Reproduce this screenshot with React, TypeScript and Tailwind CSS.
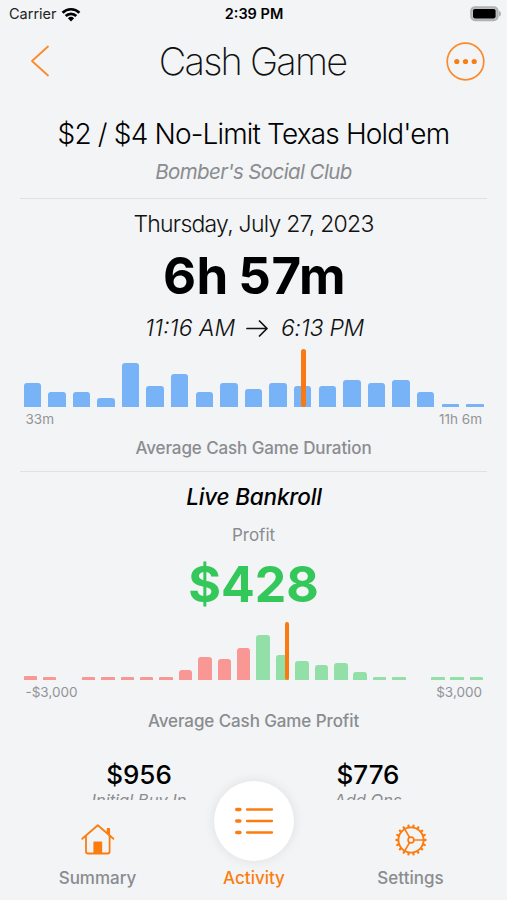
import type { ReactNode } from "react";

type Bar = { height: number; color: string };

const durationBars = [24, 15, 15, 9, 44, 21, 33, 15, 24, 18, 24, 21, 21, 27, 24, 27, 15, 3, 3].map(
  (height): Bar => ({ height, color: "bg-[#78b3f8]" })
);

const profitBars: Bar[] = [
  ...[4, 2.5, 0, 2.5, 2.5, 2.5, 2.5, 2.5, 10, 22.5, 21, 32].map((height) => ({ height, color: "bg-[#f99795]" })),
  ...[44.5, 24.5, 19, 15, 17, 8, 2.5, 2.5, 0, 2.5, 2.5, 2.5].map((height) => ({ height, color: "bg-[#93dfa8]" })),
];

const WifiIcon = () => (
  <svg width="20" height="15" viewBox="0 0 20 15" fill="none" stroke="#000" strokeWidth="2.7">
    <path d="M1.6 5.7a12 12 0 0 1 16.8 0" />
    <path d="M4.7 9a7.6 7.6 0 0 1 10.6 0" />
    <path d="M10 14.4 6.9 11.2a4.5 4.5 0 0 1 6.2 0Z" fill="#000" stroke="none" />
  </svg>
);

const BatteryIcon = () => (
  <svg width="32" height="16" viewBox="0 0 32 16">
    <rect x="1.2" y="1.2" width="26.4" height="13" rx="3.8" fill="#c4c5c7" stroke="#b0b1b3" strokeWidth="2" />
    <rect x="3" y="3" width="22.6" height="9.4" rx="1.8" fill="#000" />
    <path d="M29.3 5.2c1.6.6 1.6 4.4 0 5Z" fill="#b0b1b3" stroke="#b0b1b3" />
  </svg>
);

const HomeIcon = () => (
  <svg width="36" height="34" viewBox="0 0 36 34" fill="none" stroke="#fb7d10" strokeWidth="1.8" strokeLinecap="round" strokeLinejoin="round">
    <path d="M2.2 15.8 17.8 2.3l15.6 13.5" />
    <path d="M6 13v15.5a2 2 0 0 0 2 2h19.6a2 2 0 0 0 2-2V13" />
    <path d="M27.6 9.8V6h1.6v5.6" />
    <path d="M14.3 30V19.5h7V30Z" fill="#fb7d10" />
  </svg>
);

const ListIcon = () => (
  <svg width="40" height="28" viewBox="0 0 40 28" fill="none" stroke="#fb7d10" strokeLinecap="round">
    {[2.5, 14, 25.5].map((y) => (
      <g key={y}>
        <path d={`M2.7 ${y}h3.2`} strokeWidth="3.4" />
        <path d={`M13 ${y}h25`} strokeWidth="2.3" />
      </g>
    ))}
  </svg>
);

const GearIcon = () => (
  <svg width="34" height="34" viewBox="0 0 34 34" fill="none" stroke="#fb7d10">
    <circle cx="17" cy="17" r="12.6" strokeWidth="1.9" />
    {Array.from({ length: 18 }, (_, i) => (
      <path key={i} d="M17 4V2.4" strokeWidth="2.3" strokeLinecap="round" transform={`rotate(${i * 20 + 10} 17 17)`} />
    ))}
    <circle cx="17" cy="17" r="2.9" strokeWidth="1.7" />
    <path d="M20 17h9.5M15.5 14.4 10.8 6.1M15.5 19.6l-4.7 8.3" strokeWidth="1.7" />
  </svg>
);

const Divider = ({ className }: { className: string }) => (
  <div className={`mx-5 h-px shrink-0 bg-[#e0e1e4] ${className}`} />
);

type HistogramProps = {
  bars: Bar[];
  gap: string;
  marker: number;
  min: string;
  max: string;
  caption: string;
};

const Histogram = ({ bars, gap, marker, min, max, caption }: HistogramProps) => (
  <div className="shrink-0">
    <div className={`relative mx-[23.5px] flex h-[58px] items-end ${gap}`}>
      {bars.map((bar, index) => (
        <div
          key={index}
          className={`flex-1 ${bar.height > 5 ? "rounded-t-[3px]" : "rounded-t-[1px]"} ${bar.color}`}
          style={{ height: bar.height }}
        />
      ))}
      <div className="absolute inset-y-0 w-[4.5px] rounded-full bg-[#f97a12]" style={{ left: marker }} />
    </div>
    <div className="mt-[3.5px] mr-[25px] ml-[25.5px] flex h-[19px] items-center justify-between text-[13.5px] text-[#929396]">
      <span>{min}</span>
      <span>{max}</span>
    </div>
    <div className="mt-[9px] flex h-[22px] items-center justify-center text-[17px] font-medium tracking-[-0.1px] text-[#8b8c8f]">
      {caption}
    </div>
  </div>
);

const Amount = ({ value, label }: { value: string; label: string }) => (
  <div className="flex w-[229px] flex-col items-center">
    <span className="flex h-[33px] items-center text-[26px] font-medium">{value}</span>
    <span className="-mt-px flex h-5 items-center text-[16.5px] italic text-[#8b8c8f]">{label}</span>
  </div>
);

const Tab = ({ icon, label, active }: { icon: ReactNode; label: string; active?: boolean }) => (
  <div className="flex w-[156.5px] flex-col items-center justify-end">
    {icon}
    <span className={`flex h-6 items-center text-[17px] font-medium ${active ? "text-[#fb7d10]" : "text-[#8b8c8f]"}`}>
      {label}
    </span>
  </div>
);

const App = () => {
  return (
    <main className="flex h-[900px] w-[507px] flex-col overflow-hidden bg-[#f2f4f6] font-['Inter',sans-serif] whitespace-nowrap text-black">
      {/* Status bar */}
      <div className="grid h-7 shrink-0 grid-cols-3 items-center pr-[5px] pl-[9px] text-[14.5px]">
        <div className="flex items-center gap-1">
          <span className="text-[#222]">Carrier</span>
          <WifiIcon />
        </div>
        <span className="pr-[3px] text-center font-semibold">2:39 PM</span>
        <div className="flex justify-end">
          <BatteryIcon />
        </div>
      </div>

      {/* Title bar */}
      <header className="flex h-[66px] shrink-0 items-center justify-between pr-[22px] pl-[30px]">
        <svg width="31" height="32" viewBox="0 0 31 32" fill="none" stroke="#fb8a2a" strokeWidth="1.8" strokeLinecap="round" strokeLinejoin="round">
          <path d="M18 1.5 2 16l16 14.5" />
        </svg>
        <h1 className="pr-[2px] text-[38px] font-extralight tracking-[-1.8px] text-[#111]">Cash Game</h1>
        <svg width="39" height="39" viewBox="0 0 39 39" fill="#fb7d10">
          <circle cx="19.5" cy="19.5" r="18.3" fill="none" stroke="#fb8a2a" strokeWidth="1.7" />
          <circle cx="10.8" cy="19.5" r="2.6" />
          <circle cx="19.5" cy="19.5" r="2.6" />
          <circle cx="28.2" cy="19.5" r="2.6" />
        </svg>
      </header>

      {/* Session details */}
      <section className="flex h-[706px] shrink-0 flex-col overflow-hidden">
        <h2 className="mt-5 flex h-10 shrink-0 items-center justify-center text-[28px] font-light tracking-[-0.83px]">
          $2 / $4 No-Limit Texas Hold'em
        </h2>
        <p className="mt-[5px] flex h-[27px] shrink-0 items-center justify-center text-[20.5px] tracking-[-0.6px] italic text-[#8b8c8f]">
          Bomber's Social Club
        </p>
        <Divider className="mt-[12px]" />

        <p className="mt-[9px] flex h-8 shrink-0 items-center justify-center text-[23px] font-light tracking-[-0.75px] text-[#111]">
          Thursday, July 27, 2023
        </p>
        <p className="mt-[6px] flex h-[60px] shrink-0 items-center justify-center pl-[2px] text-[51px] font-bold tracking-[0.5px] [word-spacing:-3px]">
          6h 57m
        </p>
        <p className="mt-[7px] mb-[4.5px] flex h-[31px] shrink-0 items-center justify-center pl-[2px] text-[23px] font-light italic text-[#111]">
          <span>11:16 AM</span>
          <svg className="mr-[13px] ml-[11px]" width="22" height="18" viewBox="0 0 22 18" fill="none" stroke="#111" strokeWidth="1.7" strokeLinecap="round" strokeLinejoin="round">
            <path d="M1 8.5h20M13.5 1 21 8.5 13.5 16" />
          </svg>
          <span className="tracking-[-0.3px]">6:13 PM</span>
        </p>
        <Histogram
          bars={durationBars}
          gap="gap-[7.2px]"
          marker={277.7}
          min="33m"
          max="11h 6m"
          caption="Average Cash Game Duration"
        />
        <Divider className="mt-[11px]" />

        <p className="mt-[9px] flex h-8 shrink-0 items-center justify-center pl-px text-[22.5px] font-medium tracking-[-0.2px] italic">
          Live Bankroll
        </p>
        <p className="mt-3 flex h-[22px] shrink-0 items-center justify-center text-[17px] text-[#8b8c8f]">Profit</p>
        <p className="mt-[7px] mb-[7.5px] flex h-[60px] shrink-0 items-center justify-center text-[50px] font-bold text-[#34c759]">
          $428
        </p>
        <Histogram
          bars={profitBars}
          gap="gap-[5.9px]"
          marker={261.2}
          min="-$3,000"
          max="$3,000"
          caption="Average Cash Game Profit"
        />

        <div className="mt-[25px] flex shrink-0 justify-center">
          <Amount value="$956" label="Initial Buy In" />
          <Amount value="$776" label="Add Ons" />
        </div>
      </section>

      {/* Tab bar */}
      <nav className="flex h-[100px] shrink-0 items-end justify-center pb-[9px] pl-px">
        <Tab icon={<div className="mb-[10px]"><HomeIcon /></div>} label="Summary" />
        <Tab
          icon={
            <div className="mb-[6px] flex h-20 w-20 items-center justify-center rounded-full bg-white shadow-[0_0_12px_rgba(0,0,0,0.09)]">
              <ListIcon />
            </div>
          }
          label="Activity"
          active
        />
        <Tab icon={<div className="mb-[10px]"><GearIcon /></div>} label="Settings" />
      </nav>
    </main>
  );
};

export default App;
